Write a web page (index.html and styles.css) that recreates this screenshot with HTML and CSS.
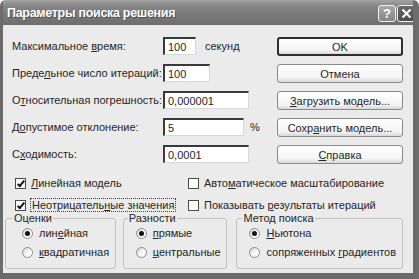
FILE: index.html
```html
<!DOCTYPE html>
<html lang="ru">
<head>
    <meta charset="UTF-8"/>
    <title>Параметры поиска решения</title>
    <link rel="stylesheet" href="styles.css">
</head>
<body>

<div class="window">
    <div class="titlebar">
        <span class="title">Параметры поиска решения</span>
        <div class="caption-buttons">
            <span class="cap-btn help">?</span>
            <span class="cap-btn close">
                <svg width="11" height="11" viewBox="0 0 11 11"><path d="M1.5 1.5 L9.5 9.5 M9.5 1.5 L1.5 9.5" stroke="#fff" stroke-width="2"/></svg>
            </span>
        </div>
    </div>

    <div class="content">
        <div class="top">
            <div class="fields">
                <div class="row">
                    <label class="caption">Максимальное <u>в</u>ремя:</label>
                    <input class="field short" type="text" value="100"/>
                    <span class="unit">секунд</span>
                </div>
                <div class="row">
                    <label class="caption">Преде<u>л</u>ьное число итераций:</label>
                    <input class="field mid" type="text" value="100"/>
                </div>
                <div class="row">
                    <label class="caption">О<u>т</u>носительная погрешность:</label>
                    <input class="field long" type="text" value="0,000001"/>
                </div>
                <div class="row">
                    <label class="caption">Д<u>о</u>пустимое отклонение:</label>
                    <input class="field pct-field" type="text" value="5"/>
                    <span class="unit pct">%</span>
                </div>
                <div class="row">
                    <label class="caption">С<u>х</u>одимость:</label>
                    <input class="field long" type="text" value="0,0001"/>
                </div>
            </div>

            <div class="buttons">
                <button class="btn default">OK</button>
                <button class="btn">Отмена</button>
                <button class="btn"><u>З</u>агрузить модель...</button>
                <button class="btn">Сохр<u>а</u>нить модель...</button>
                <button class="btn"><u>С</u>правка</button>
            </div>
        </div>

        <div class="checks">
            <label class="check"><span class="box checked"></span><span><u>Л</u>инейная модель</span></label>
            <label class="check"><span class="box"></span><span>Авто<u>м</u>атическое масштабирование</span></label>
            <label class="check"><span class="box checked"></span><span class="focus">Неотрицатель<u>н</u>ые значения</span></label>
            <label class="check"><span class="box"></span><span>Показывать <u>р</u>езультаты итераций</span></label>
        </div>

        <div class="groups">
            <fieldset class="group g1">
                <legend>Оценки</legend>
                <label class="radio"><span class="dot on"></span><span>лин<u>е</u>йная</span></label>
                <label class="radio"><span class="dot"></span><span><u>к</u>вадратичная</span></label>
            </fieldset>
            <fieldset class="group g2">
                <legend>Разности</legend>
                <label class="radio"><span class="dot on"></span><span><u>п</u>рямые</span></label>
                <label class="radio"><span class="dot"></span><span><u>ц</u>ентральные</span></label>
            </fieldset>
            <fieldset class="group g3">
                <legend>Метод поиска</legend>
                <label class="radio"><span class="dot on"></span><span><u>Н</u>ьютона</span></label>
                <label class="radio"><span class="dot"></span><span>сопряженных <u>г</u>радиентов</span></label>
            </fieldset>
        </div>
    </div>
</div>

</body>
</html>
```

FILE: styles.css
```css
body {
  margin: 0;
  background: #fff;
  font-family: "Liberation Sans", Arial, sans-serif;
  font-size: 11px;
  color: #262626;
  white-space: nowrap;
}
u {
  text-decoration: underline;
  text-underline-offset: 1px;
}
.window {
  width: 419px;
  height: 279px;
  box-sizing: border-box;
  background: #ebebeb;
  border: 3px solid #6c6c6c;
  border-right-width: 6px;
  border-bottom-width: 6px;
  border-top: none;
  border-radius: 6px 6px 0 0;
  display: flex;
  flex-direction: column;
  overflow: hidden;
}
.titlebar {
  height: 25px;
  flex: none;
  margin: 0 -6px 0 -3px;
  background: linear-gradient(#a4a4a4, #848484 25%, #767676 70%, #6e6e6e);
  display: flex;
  align-items: center;
  justify-content: space-between;
  padding: 0 3px 0 7px;
  border-radius: 6px 6px 0 0;
}
.title {
  color: #fff;
  font-weight: bold;
  font-size: 12.5px;
  letter-spacing: -0.3px;
  text-shadow: 1px 1px 0 #505050;
}
.caption-buttons {
  display: flex;
  gap: 1px;
  margin-top: 1px;
}
.cap-btn {
  width: 18px;
  height: 17px;
  box-sizing: border-box;
  border: 1px solid #f2f2f2;
  border-radius: 3px;
  color: #fff;
  font-weight: bold;
  font-size: 13px;
  display: flex;
  align-items: center;
  justify-content: center;
}
.cap-btn.help {
  background: linear-gradient(#a8a8a8, #868686);
}
.cap-btn.close {
  width: 19px;
  background: linear-gradient(#6a6a6a, #4c4c4c);
}
.content {
  padding: 12px 10px 0 9px;
}
.top {
  display: flex;
  justify-content: space-between;
}
.fields {
  display: flex;
  flex-direction: column;
  gap: 9px;
}
.row {
  display: flex;
  align-items: center;
  height: 18px;
}
.caption {
  width: 151px;
  flex: none;
}
.field {
  height: 18px;
  box-sizing: border-box;
  border: 1px solid #d8d8d8;
  border-top: 2px solid #3a3a3a;
  border-left: 2px solid #3a3a3a;
  background: #fff;
  font-family: "Liberation Sans", Arial, sans-serif;
  font-size: 11px;
  padding: 0 3px;
  color: #262626;
}
.short { width: 33px; }
.mid { width: 47px; }
.long { width: 86px; }
.pct-field { width: 81px; }
.unit {
  margin-left: 9px;
}
.pct {
  margin-left: 6px;
}
.buttons {
  display: flex;
  flex-direction: column;
  gap: 8px;
}
.btn {
  width: 126px;
  height: 19px;
  box-sizing: border-box;
  border: 1px solid #8a8a8a;
  border-radius: 3px;
  background: linear-gradient(#ffffff, #f4f4f4 75%, #d8d8d8);
  font-family: "Liberation Sans", Arial, sans-serif;
  font-size: 11px;
  color: #262626;
  padding: 0;
}
.btn.default {
  border: 2px solid #2e2e2e;
}
.checks {
  display: grid;
  grid-template-columns: 173px auto;
  row-gap: 6px;
  margin-top: 11px;
  padding-left: 3px;
}
.check {
  display: flex;
  align-items: center;
  height: 16px;
  gap: 5px;
}
.box {
  width: 11px;
  height: 11px;
  flex: none;
  box-sizing: border-box;
  border: 1px solid #4a4a4a;
  background: #fff;
  position: relative;
}
.box.checked::after {
  content: "";
  position: absolute;
  left: 3px;
  top: 0;
  width: 2px;
  height: 6px;
  border: solid #111;
  border-width: 0 2px 2px 0;
  transform: rotate(40deg);
}
.focus {
  outline: 1px dotted #444;
  padding: 0 1px;
}
.groups {
  display: flex;
  margin: -1px 0 0 -7px;
}
.group {
  margin: 0;
  border: 1px solid #c2c2c2;
  border-radius: 3px;
  padding: 1px 0 8px 12px;
  box-sizing: border-box;
  display: flex;
  flex-direction: column;
  gap: 3px;
}
.group legend {
  padding: 0 1px;
  margin-left: -7px;
}
.g1 {
  width: 111px;
  padding-left: 16px;
}
.g1 legend { margin-left: -9px; }
.g2 {
  width: 105px;
  margin-left: 7px;
}
.g2 legend { margin-left: -8px; }
.g3 {
  width: 167px;
  margin-left: 9px;
}
.radio {
  display: flex;
  align-items: center;
  gap: 6px;
  height: 16px;
}
.dot {
  width: 11px;
  height: 11px;
  flex: none;
  box-sizing: border-box;
  border-radius: 50%;
  border: 1px solid #8c8c8c;
  background: linear-gradient(135deg, #cfcfcf, #ffffff 60%);
  display: flex;
  align-items: center;
  justify-content: center;
}
.dot.on::after {
  content: "";
  width: 5px;
  height: 5px;
  border-radius: 50%;
  background: #111;
}
```
